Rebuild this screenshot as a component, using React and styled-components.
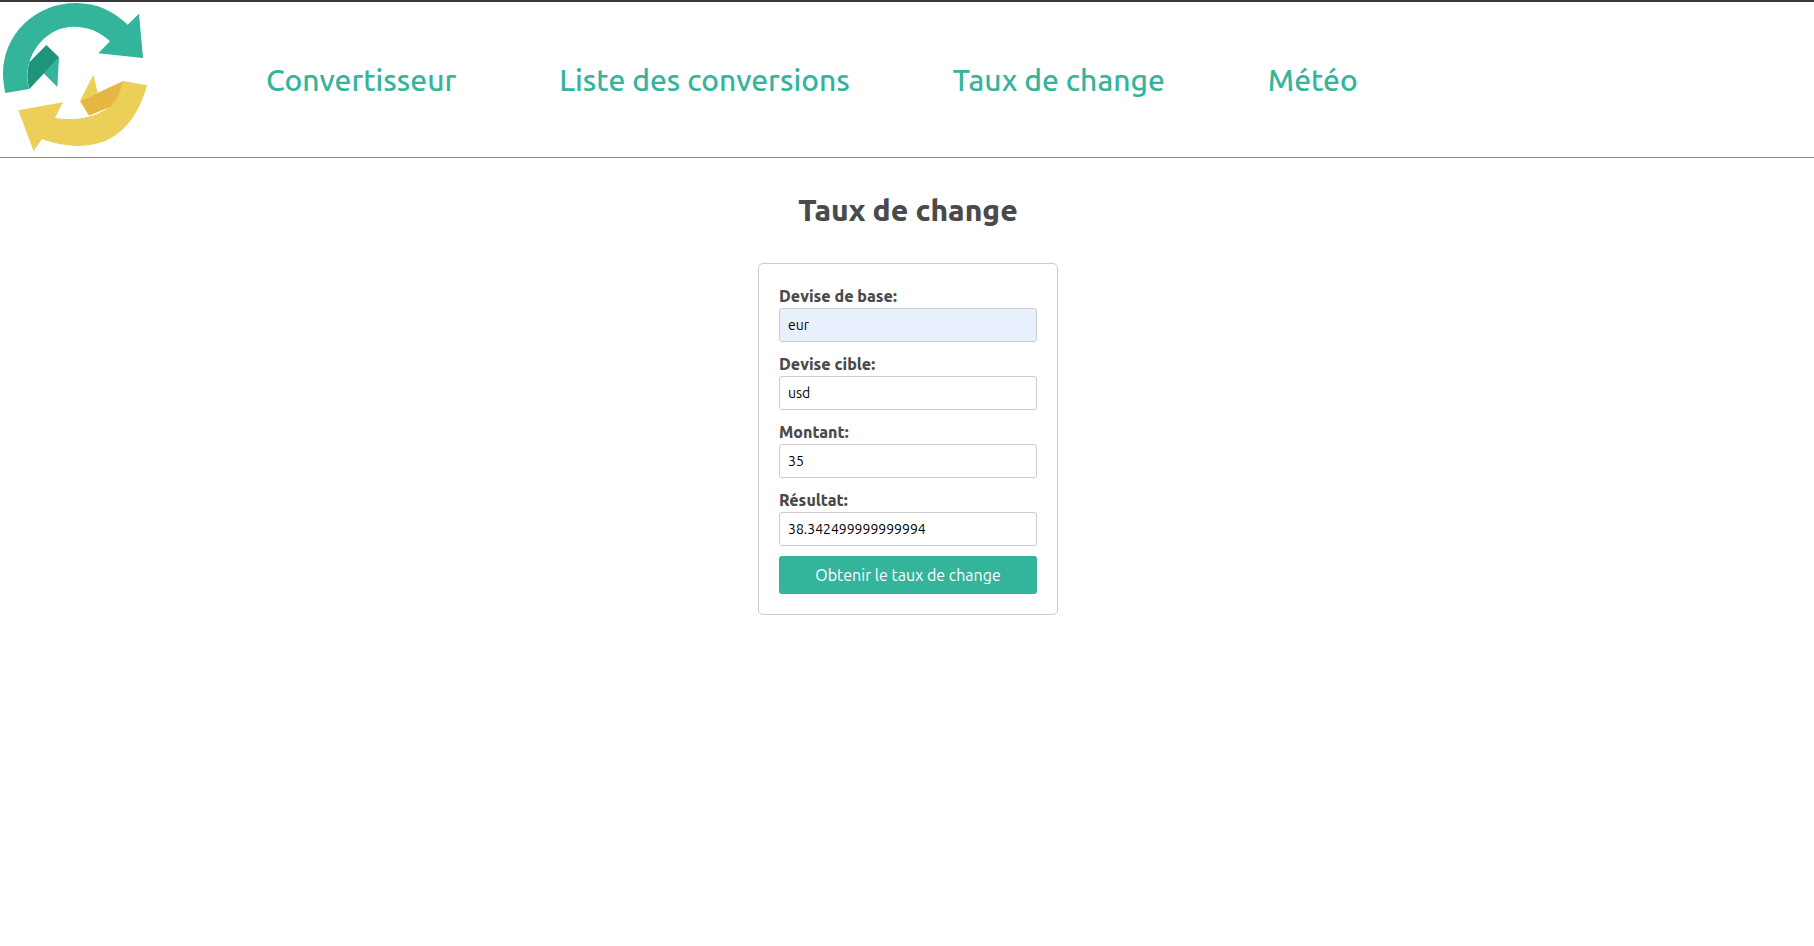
import React, { useState } from "react";
import styled, { createGlobalStyle } from "styled-components";

const green = "#33b49b";
const ink = "#4a4a4a";

const GlobalStyle = createGlobalStyle`
  * { box-sizing: border-box; }
  body {
    margin: 0;
    background: #fff;
    color: ${ink};
    font-family: Ubuntu, "Noto Sans", sans-serif;
    font-size: 16px;
    line-height: 24px;
  }
`;

const Header = styled.header`
  display: flex;
  align-items: center;
  height: 158px;
  border-top: 2px solid #3b383e;
  border-bottom: 1px solid ${green};
`;

const HomeLink = styled.a`
  display: block;
  width: 150px;
  height: 155px;
  flex: none;
`;

const Logo = styled.svg`
  display: block;
  width: 150px;
  height: 155px;
`;

const Nav = styled.nav`
  display: flex;
  gap: 103px;
  margin-left: 116px;
`;

const NavLink = styled.a`
  color: ${green};
  font-size: 30px;
  line-height: 48px;
  font-weight: 500;
  text-decoration: none;
  white-space: nowrap;
`;

const Main = styled.main`
  display: flex;
  flex-direction: column;
  align-items: center;
  padding: 28px 16px 28px 18px;
`;

const Title = styled.h1`
  margin: 0 0 29px;
  font-size: 30px;
  line-height: 48px;
  font-weight: 800;
`;

const Card = styled.form`
  width: 100%;
  max-width: 300px;
  padding: 20px;
  border: 1px solid #ccc;
  border-radius: 5px;
`;

const Field = styled.div`
  margin-bottom: 10px;
`;

const Label = styled.label`
  display: block;
  font-size: 16px;
  font-weight: 800;
`;

const Input = styled.input`
  display: block;
  width: 100%;
  height: 34px;
  padding: 8px;
  border: 1px solid #ccc;
  border-radius: 3px;
  background: ${(p) => (p.$filled ? "#e8f0fe" : "#fff")};
  color: #000;
  font-family: inherit;
  font-size: 14px;
`;

const Button = styled.button`
  display: block;
  width: 100%;
  height: 38px;
  padding: 0 10px;
  border: 0;
  border-radius: 3px;
  background: ${green};
  color: #fff;
  font-family: inherit;
  font-size: 16px;
  cursor: pointer;
`;

const links = ["Convertisseur", "Liste des conversions", "Taux de change", "Météo"];

const fields = [
  { id: "base", label: "Devise de base:", value: "eur", filled: true },
  { id: "cible", label: "Devise cible:", value: "usd" },
  { id: "montant", label: "Montant:", value: "35" },
  { id: "resultat", label: "Résultat:", value: "38.342499999999994", readOnly: true },
];

function ArrowsLogo() {
  return (
    <Logo viewBox="0 6 450 465" aria-hidden="true">
      <path fill="#33b49b" d="M16 279C12 260 9 240 9 222C9 102 107 9 228 9C290 9 342 34 383 74L417 41L429 174L295 160L330 124C300 94 262 80 222 80C160 80 107 124 88 187C79 214 79 240 88 267Z" />
      <path fill="#33b49b" d="M177 172L172 261L131 220Z" />
      <path fill="#1e957b" d="M139 135L177 172L88 267C80 240 80 214 88 187Z" />
      <path fill="#ebcf58" d="M280 224L293 278L240 303Z" />
      <path fill="#ebcf58" d="M370 243L441 256C419 340 373 399 314 424C250 448 180 437 126 417L101 454L55 331L189 307L165 353C230 365 287 351 328 321Z" />
      <path fill="#e5b843" d="M370 243C361 277 349 302 330 321L267 347L240 303Z" />
    </Logo>
  );
}

export default function App() {
  const [values, setValues] = useState(() =>
    Object.fromEntries(fields.map((f) => [f.id, f.value]))
  );
  return (
    <>
      <GlobalStyle />
      <Header>
        <HomeLink href="#" aria-label="Accueil">
          <ArrowsLogo />
        </HomeLink>
        <Nav>
          {links.map((text) => (
            <NavLink key={text} href="#">{text}</NavLink>
          ))}
        </Nav>
      </Header>
      <Main>
        <Title>Taux de change</Title>
        <Card onSubmit={(e) => e.preventDefault()}>
          {fields.map((f) => (
            <Field key={f.id}>
              <Label htmlFor={f.id}>{f.label}</Label>
              <Input
                id={f.id}
                type="text"
                $filled={f.filled}
                readOnly={f.readOnly}
                value={values[f.id]}
                onChange={(e) => setValues({ ...values, [f.id]: e.target.value })}
              />
            </Field>
          ))}
          <Button type="submit">Obtenir le taux de change</Button>
        </Card>
      </Main>
    </>
  );
}
